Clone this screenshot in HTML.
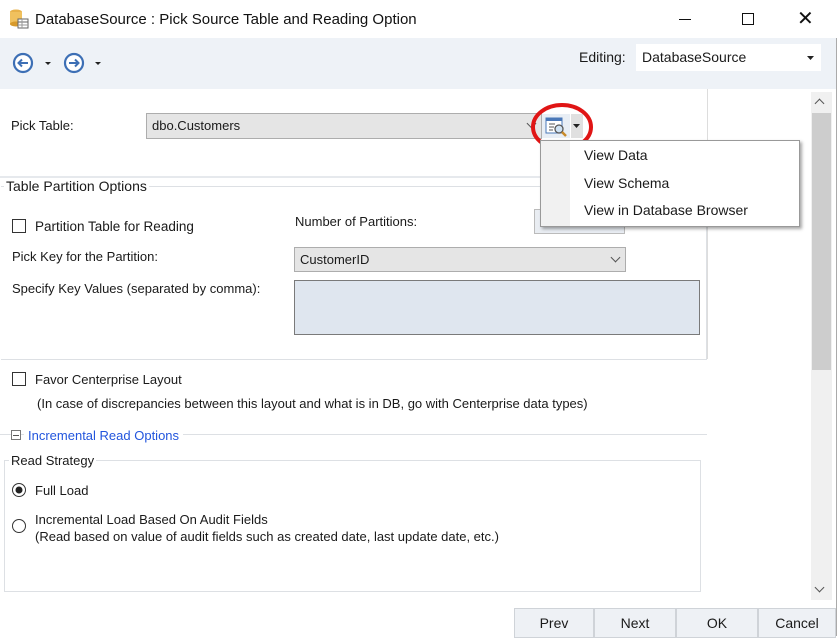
<!DOCTYPE html>
<html><head><style>
*{margin:0;padding:0;box-sizing:border-box}
body{width:840px;height:636px;overflow:hidden;background:#fff;font-family:"Liberation Sans",sans-serif;font-size:13px;color:#1a1a1a;position:relative}
.a{position:absolute;white-space:nowrap}
.cb{position:absolute;width:14px;height:14px;border:1px solid #333;background:#fff}
.combo{position:absolute;background:#e5e5e5;border:1px solid #adadad;padding:4px 5px;font-size:13px}
.chev{position:absolute;right:6px;top:6px;width:7px;height:7px;border-right:1px solid #555;border-bottom:1px solid #555;transform:rotate(45deg)}
.btn{position:absolute;top:608px;height:30px;background:#eef1f5;border:1px solid #cfd3d8;text-align:center;line-height:28px;font-size:14px}
</style></head><body>
<!-- title -->
<div class="a" style="left:0;top:0;width:840px;height:38px;background:#fff"></div>
<svg class="a" style="left:9px;top:9px" width="20" height="20"><ellipse cx="7" cy="3" rx="6" ry="2.5" fill="#e8b24a"/><rect x="1" y="3" width="12" height="12" fill="#f0c15e"/><ellipse cx="7" cy="15" rx="6" ry="2.5" fill="#d79a2c"/><rect x="9" y="10" width="10" height="9" fill="#fff" stroke="#666"/><line x1="9" y1="13" x2="19" y2="13" stroke="#666"/><line x1="9" y1="16" x2="19" y2="16" stroke="#999"/><line x1="13" y1="10" x2="13" y2="19" stroke="#999"/></svg>
<div class="a" style="left:35px;top:11px;font-size:15px;color:#111">DatabaseSource : Pick Source Table and Reading Option</div>
<div class="a" style="left:679px;top:19px;width:12px;height:1px;background:#111"></div>
<div class="a" style="left:742px;top:13px;width:12px;height:12px;border:1px solid #111"></div>
<div class="a" style="left:797px;top:6px;font-size:20px;color:#111">✕</div>
<!-- toolbar -->
<div class="a" style="left:0;top:38px;width:836px;height:51px;background:#eef2f7"></div>
<svg class="a" style="left:12px;top:52px" width="95" height="24"><circle cx="11" cy="11" r="9" fill="#fff" stroke="#3d6fb5" stroke-width="2.2"/><path d="M16 11H7M10 7.5L6.5 11L10 14.5" stroke="#3d6fb5" stroke-width="2" fill="none"/><path d="M33 10h6l-3 3z" fill="#222"/><circle cx="62" cy="11" r="9" fill="#fff" stroke="#3d6fb5" stroke-width="2.2"/><path d="M57 11H66M63 7.5L66.5 11L63 14.5" stroke="#3d6fb5" stroke-width="2" fill="none"/><path d="M83 10h6l-3 3z" fill="#222"/></svg>
<div class="a" style="left:579px;top:49px;font-size:14px">Editing:</div>
<div class="a" style="left:636px;top:44px;width:185px;height:27px;background:#fff"></div>
<div class="a" style="left:642px;top:49px;font-size:14px">DatabaseSource</div>
<svg class="a" style="left:806px;top:54px" width="10" height="8"><path d="M1 2h7l-3.5 4z" fill="#222"/></svg>
<div class="a" style="left:836px;top:38px;width:1px;height:598px;background:#aaa"></div>
<!-- main -->
<div class="a" style="left:707px;top:89px;width:1px;height:270px;background:#ddd"></div>
<!-- scrollbar -->
<div class="a" style="left:811px;top:92px;width:21px;height:508px;background:#f0f0f0"></div>
<div class="a" style="left:812px;top:113px;width:19px;height:257px;background:#cdcdcd"></div>
<div class="a" style="left:816px;top:100px;width:7px;height:7px;border-left:1.5px solid #555;border-top:1.5px solid #555;transform:rotate(45deg)"></div>
<div class="a" style="left:816px;top:584px;width:7px;height:7px;border-right:1.5px solid #555;border-bottom:1.5px solid #555;transform:rotate(45deg)"></div>

<div class="a" style="left:11px;top:118px">Pick Table:</div>
<div class="combo" style="left:146px;top:113px;width:396px;height:26px">dbo.Customers<div class="chev"></div></div>
<div class="a" style="left:542px;top:114px;width:28px;height:24px;background:#e8eef5"></div>
<svg class="a" style="left:545px;top:116px" width="24" height="22"><rect x="1" y="2" width="16" height="15" fill="#fff" stroke="#4a78b8"/><rect x="1" y="2" width="16" height="3" fill="#4a78b8"/><path d="M4 8h6M4 11h5M4 14h4" stroke="#555"/><circle cx="14" cy="13" r="4" fill="#cfe3f5" stroke="#555" stroke-width="1.3"/><path d="M17 16l4 4" stroke="#c88a2a" stroke-width="2.5"/></svg>
<div class="a" style="left:571px;top:114px;width:12px;height:24px;background:#e0e0e0"></div>
<svg class="a" style="left:572px;top:123px" width="10" height="6"><path d="M1 1h7l-3.5 4z" fill="#222"/></svg>
<svg class="a" style="left:528px;top:98px" width="70" height="60"><ellipse cx="34" cy="29" rx="29" ry="22" fill="none" stroke="#e01515" stroke-width="4"/></svg>

<div class="a" style="left:0;top:176px;width:707px;height:2px;background:#e6e9ed"></div>
<div class="a" style="left:1px;top:186px;width:706px;height:174px;border:1px solid #dde0e4;border-left:none"></div>
<div class="a" style="left:4px;top:178px;background:#fff;padding:0 2px;font-size:14px">Table Partition Options</div>
<div class="cb" style="left:12px;top:219px"></div>
<div class="a" style="left:35px;top:219px;font-size:13.5px">Partition Table for Reading</div>
<div class="a" style="left:295px;top:214px">Number  of Partitions:</div>
<div class="a" style="left:534px;top:209px;width:91px;height:25px;background:#e9edf2;border:1px solid #bbb"></div>
<div class="a" style="left:12px;top:249px">Pick Key for the Partition:</div>
<div class="combo" style="left:294px;top:247px;width:332px;height:25px">CustomerID<div class="chev"></div></div>
<div class="a" style="left:12px;top:281px">Specify Key Values (separated by comma):</div>
<div class="a" style="left:294px;top:280px;width:406px;height:55px;background:#dfe6ef;border:1px solid #7a7a7a"></div>

<div class="cb" style="left:12px;top:372px"></div>
<div class="a" style="left:35px;top:372px">Favor Centerprise Layout</div>
<div class="a" style="left:37px;top:396px">(In case of discrepancies between this layout and what is in DB, go with Centerprise data types)</div>
<div class="a" style="left:0;top:434px;width:707px;height:1px;background:#dde0e4"></div>
<div class="a" style="left:11px;top:430px;width:10px;height:10px;border:1px solid #777;background:#fff"></div>
<div class="a" style="left:13px;top:435px;width:6px;height:1px;background:#555"></div>
<div class="a" style="left:24px;top:428px;background:#fff;padding:0 4px;color:#2255dd;font-size:13px">Incremental Read Options</div>
<div class="a" style="left:4px;top:460px;width:697px;height:132px;border:1px solid #dde0e4"></div>
<div class="a" style="left:9px;top:453px;background:#fff;padding:0 2px">Read Strategy</div>
<svg class="a" style="left:11px;top:482px" width="16" height="60"><circle cx="8" cy="8" r="6.5" fill="#fff" stroke="#333"/><circle cx="8" cy="8" r="3.5" fill="#222"/><circle cx="8" cy="44" r="6.5" fill="#fff" stroke="#333"/></svg>
<div class="a" style="left:35px;top:483px">Full Load</div>
<div class="a" style="left:35px;top:512px">Incremental Load Based On Audit Fields</div>
<div class="a" style="left:35px;top:529px">(Read based on value of audit fields such as created date, last update date, etc.)</div>

<div class="btn" style="left:514px;width:80px">Prev</div>
<div class="btn" style="left:594px;width:82px">Next</div>
<div class="btn" style="left:676px;width:82px">OK</div>
<div class="btn" style="left:758px;width:78px">Cancel</div>

<!-- menu -->
<div class="a" style="left:540px;top:140px;width:260px;height:87px;background:#fff;border:1px solid #999;box-shadow:2px 2px 3px rgba(0,0,0,.35)"></div>
<div class="a" style="left:541px;top:141px;width:29px;height:85px;background:#f1f1f1"></div>
<div class="a" style="left:584px;top:147px;font-size:14px">View Data</div>
<div class="a" style="left:584px;top:175px;font-size:14px">View Schema</div>
<div class="a" style="left:584px;top:202px;font-size:14px">View in Database Browser</div>
</body></html>
